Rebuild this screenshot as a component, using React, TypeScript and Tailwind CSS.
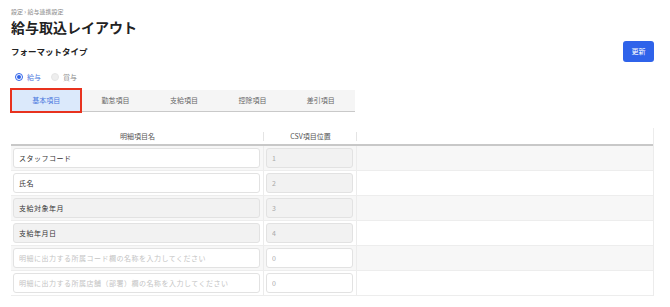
import React, { useState } from "react";

type Row = { name: string; pos: string; nameLocked: boolean; posLocked: boolean; placeholder?: string };

const rows: Row[] = [
  { name: "スタッフコード", pos: "1", nameLocked: false, posLocked: true },
  { name: "氏名", pos: "2", nameLocked: false, posLocked: true },
  { name: "支給対象年月", pos: "3", nameLocked: true, posLocked: true },
  { name: "支給年月日", pos: "4", nameLocked: true, posLocked: true },
  { name: "", pos: "0", nameLocked: false, posLocked: false, placeholder: "明細に出力する所属コード欄の名称を入力してください" },
  { name: "", pos: "0", nameLocked: false, posLocked: false, placeholder: "明細に出力する所属店舗（部署）欄の名称を入力してください" },
];

const tabs = ["基本項目", "勤怠項目", "支給項目", "控除項目", "差引項目"];

const App = () => {
  const [tab, setTab] = useState(0);
  const [kind, setKind] = useState("salary");

  return (
    <div
      className="w-[670px] h-[307px] overflow-hidden bg-white pl-[11px] pr-[16px] text-[#333]"
      style={{ fontFamily: '"Noto Sans CJK JP", "Noto Sans", sans-serif' }}
    >
      <div className="pt-[8px] text-[6px] leading-[8px] text-[#888]">設定 › 給与連携設定</div>
      <h1 className="mt-[1px] text-[14px] leading-[20px] font-bold text-[#222]">給与取込レイアウト</h1>

      <div className="flex items-center justify-between mt-[4px] h-[21px]">
        <div className="text-[8.5px] font-bold text-[#222]">フォーマットタイプ</div>
        <button className="w-[31px] h-[21px] rounded-[3px] bg-[#2f63ea] text-white text-[7px]">更新</button>
      </div>

      {/* radio */}
      <div className="flex items-center gap-[10px] mt-[10px] h-[10px] pl-[4px]">
        <label className="flex items-center gap-[4px] text-[7px] text-[#4a78de]" onClick={() => setKind("salary")}>
          <span className="w-[8px] h-[8px] rounded-full border border-[#2f63ea] flex items-center justify-center">
            <span className="w-[4px] h-[4px] rounded-full bg-[#2f63ea]" />
          </span>
          給与
        </label>
        <label className="flex items-center gap-[4px] text-[7px] text-[#888]">
          <span className="w-[8px] h-[8px] rounded-full bg-[#eee] border border-[#e6e6e6]" />
          賞与
        </label>
      </div>

      {/* tabs */}
      <div className="mt-[8px] w-[344px] h-[22px] flex bg-[#f5f5f5] border-b border-[#c9c9c9]">
        {tabs.map((t, i) => (
          <div
            key={t}
            onClick={() => setTab(i)}
            className={`relative flex-1 flex items-center justify-center text-[7px] cursor-pointer ${
              i === tab ? "bg-[#dbe9fb] text-[#4a78de] mx-[1px]" : "text-[#666]"
            }`}
          >
            {t}
            {i === tab && (
              <span className="absolute -left-[2px] -right-[2px] -top-[2px] -bottom-[2px] border-2 border-[#e8321e] pointer-events-none" />
            )}
          </div>
        ))}
      </div>

      {/* table */}
      <div className="mt-[16px] border-r border-[#ececec]">
        <div className="grid grid-cols-[253px_93px_1fr] h-[18px] border-b-2 border-[#c8c8c8] text-[7px] text-[#555]">
          <div className="flex items-center justify-center relative">
            明細項目名
            <span className="absolute right-0 top-[4px] h-[9px] w-px bg-[#e4e4e4]" />
          </div>
          <div className="flex items-center justify-center relative">
            CSV項目位置
            <span className="absolute right-0 top-[4px] h-[9px] w-px bg-[#e4e4e4]" />
          </div>
          <div />
        </div>
        {rows.map((r, i) => (
          <div
            key={i}
            className={`grid grid-cols-[253px_93px_1fr] h-[25px] border-b border-[#ededed] ${
              i % 2 === 0 ? "bg-[#f7f7f7]" : "bg-white"
            }`}
          >
            <div className="flex items-center pl-[2px] pr-[3px] border-r border-[#ececec]">
              <input
                readOnly
                value={r.name}
                placeholder={r.placeholder}
                className={`w-full h-[20px] rounded-[3px] border border-[#e2e2e2] px-[5px] text-[7px] tracking-[0.5px] text-[#333] placeholder:text-[#c4c4c4] outline-none ${
                  r.nameLocked ? "bg-[#f2f2f2]" : "bg-white"
                }`}
              />
            </div>
            <div className="flex items-center pl-[2px] pr-[3px] border-r border-[#ececec]">
              <input
                readOnly
                value={r.pos}
                className={`w-full h-[20px] rounded-[3px] border border-[#e2e2e2] px-[5px] text-[7px] text-[#aaa] outline-none ${
                  r.posLocked ? "bg-[#f2f2f2]" : "bg-white"
                }`}
              />
            </div>
            <div />
          </div>
        ))}
      </div>
    </div>
  );
};

export default App;
